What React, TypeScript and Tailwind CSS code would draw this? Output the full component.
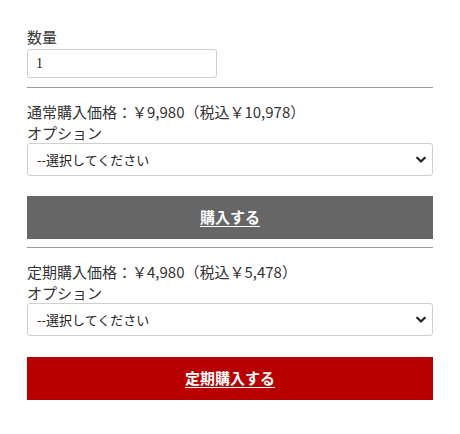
import { useState } from "react";

function OptionSelect() {
  const [value, setValue] = useState("");
  return (
    <div className="relative">
      <select
        value={value}
        onChange={(e) => setValue(e.target.value)}
        className="block w-full h-[33px] appearance-none rounded-[3px] border border-[#cfcfcf] bg-white pl-[9px] pr-8 text-[13px] text-[#222] outline-none"
      >
        <option value="">--選択してください</option>
        <option value="a">オプションA</option>
        <option value="b">オプションB</option>
      </select>
      <svg
        className="pointer-events-none absolute right-[7px] top-1/2 -translate-y-1/2"
        width="10"
        height="7"
        viewBox="0 0 10 7"
        fill="none"
      >
        <path d="M1.2 1.2 L5 5 L8.8 1.2" stroke="#222" strokeWidth="2.2" strokeLinecap="round" strokeLinejoin="round" />
      </svg>
    </div>
  );
}

export default function App() {
  const [qty, setQty] = useState("1");

  return (
    <div
      className="w-[460px] h-[434px] bg-white px-[27px] pt-[26px] text-[#333]"
      style={{ fontFamily: '"Noto Sans CJK JP", "Noto Sans", sans-serif' }}
    >
      {/* Quantity */}
      <div className="text-[15px] leading-[22px]">数量</div>
      <input
        value={qty}
        onChange={(e) => setQty(e.target.value)}
        className="mt-px block h-[29px] w-[190px] rounded-[3px] border border-[#cfcfcf] bg-white px-[8px] text-[14px] text-[#222] outline-none"
        style={{ fontFamily: '"Liberation Serif", serif' }}
      />
      <div className="mt-[9px] h-px bg-[#9a9a9a]" />

      {/* Normal purchase */}
      <div className="mt-[13px] text-[15px] leading-[21px]">通常購入価格：￥9,980（税込￥10,978）</div>
      <div className="text-[15px] leading-[21px]">オプション</div>
      <OptionSelect />
      <button className="mt-[20px] flex h-[43px] w-full items-center justify-center bg-[#666666] text-[15px] font-bold text-white underline underline-offset-[3px]">
        購入する
      </button>
      <div className="mt-[8px] h-px bg-[#9a9a9a]" />

      {/* Subscription */}
      <div className="mt-[13px] text-[15px] leading-[21px]">定期購入価格：￥4,980（税込￥5,478）</div>
      <div className="text-[15px] leading-[21px]">オプション</div>
      <OptionSelect />
      <button className="mt-[21px] flex h-[43px] w-full items-center justify-center bg-[#b80000] text-[15px] font-bold text-white underline underline-offset-[3px]">
        定期購入する
      </button>
    </div>
  );
}
